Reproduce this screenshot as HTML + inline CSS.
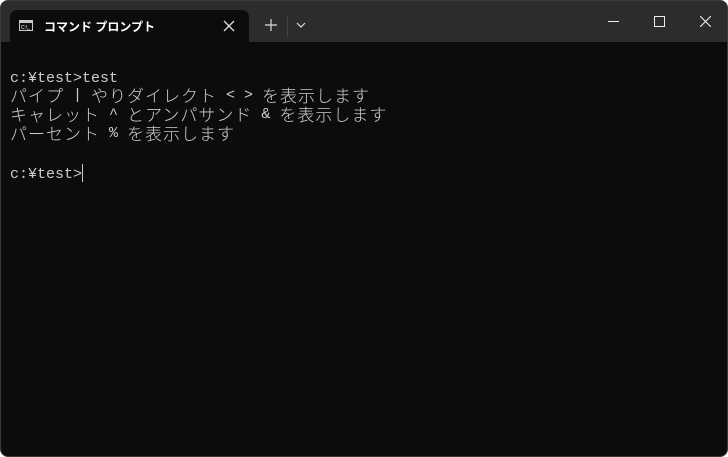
<!DOCTYPE html>
<html><head><meta charset="utf-8"><style>
body{margin:0;background:#fff;width:728px;height:457px;overflow:hidden}
.win{position:absolute;left:0;top:0;width:726px;height:455px;border:1px solid #3a3a3a;border-radius:8px;background:#0c0c0c;overflow:hidden}
.bar{position:absolute;left:0;top:0;width:100%;height:41px;background:#2c2c2c}
.tab{position:absolute;left:9px;top:9px;width:239px;height:32px;background:#0c0c0c;border-radius:7px 7px 0 0}
.tt{position:absolute;left:34px;top:8px;font:bold 12px "Liberation Sans","Noto Sans CJK JP",sans-serif;color:#fff}
.term{position:absolute;left:9px;top:68px;font:15px/19px "Liberation Mono","Noto Sans CJK JP",monospace;color:#cccccc;white-space:pre}
.term div{height:19px}
.j{display:inline-block;vertical-align:top;height:19px;font-size:17px;letter-spacing:1px;font-weight:300;line-height:19px;position:relative;top:1px}
</style></head><body><div class="win">
<div class="bar">
<div class="tab">
<svg style="position:absolute;left:9px;top:10px" width="14" height="11"><rect x=".5" y=".5" width="13" height="10" fill="#111" stroke="#ccc"/><rect x="1" y="1" width="12" height="2" fill="#ccc"/><text x="2" y="9" font-size="5" fill="#fff" font-family="Liberation Sans">C:\_</text></svg>
<div class="tt">コマンド プロンプト</div>
<svg style="position:absolute;left:213px;top:10px" width="12" height="12"><path d="M1 1L11 11M11 1L1 11" stroke="#ddd" stroke-width="1.3"/></svg>
</div>
<svg style="position:absolute;left:264px;top:18px" width="12" height="12"><path d="M6 0V12M0 6H12" stroke="#ddd" stroke-width="1.2"/></svg>
<div style="position:absolute;left:286px;top:14px;width:1px;height:22px;background:#444"></div>
<svg style="position:absolute;left:295px;top:21px" width="10" height="6"><path d="M1 1L5 5L9 1" stroke="#ddd" fill="none" stroke-width="1.2"/></svg>
<div style="position:absolute;left:607px;top:20px;width:11px;height:1px;background:#eee"></div>
<div style="position:absolute;left:653px;top:15px;width:9px;height:9px;border:1px solid #eee"></div>
<svg style="position:absolute;left:699px;top:15px" width="11" height="11"><path d="M0 0L11 11M11 0L0 11" stroke="#eee" stroke-width="1.1"/></svg>
</div>
<div class="term"><div>c:¥test&gt;test</div><div><span class="j">パイプ</span><span style="position:relative;top:-2px"> | </span><span class="j">やりダイレクト</span><span style="position:relative;top:-2px"> &lt; &gt; </span><span class="j">を表示します</span></div><div><span class="j">キャレット</span><span style="position:relative;top:-2px"> ^ </span><span class="j">とアンパサンド</span><span style="position:relative;top:-2px"> &amp; </span><span class="j">を表示します</span></div><div><span class="j">パーセント</span><span style="position:relative;top:-2px"> % </span><span class="j">を表示します</span></div><div></div><div>c:¥test&gt;<span style="display:inline-block;width:1px;height:18px;background:#ccc;vertical-align:-4px"></span></div></div>
</div></body></html>
